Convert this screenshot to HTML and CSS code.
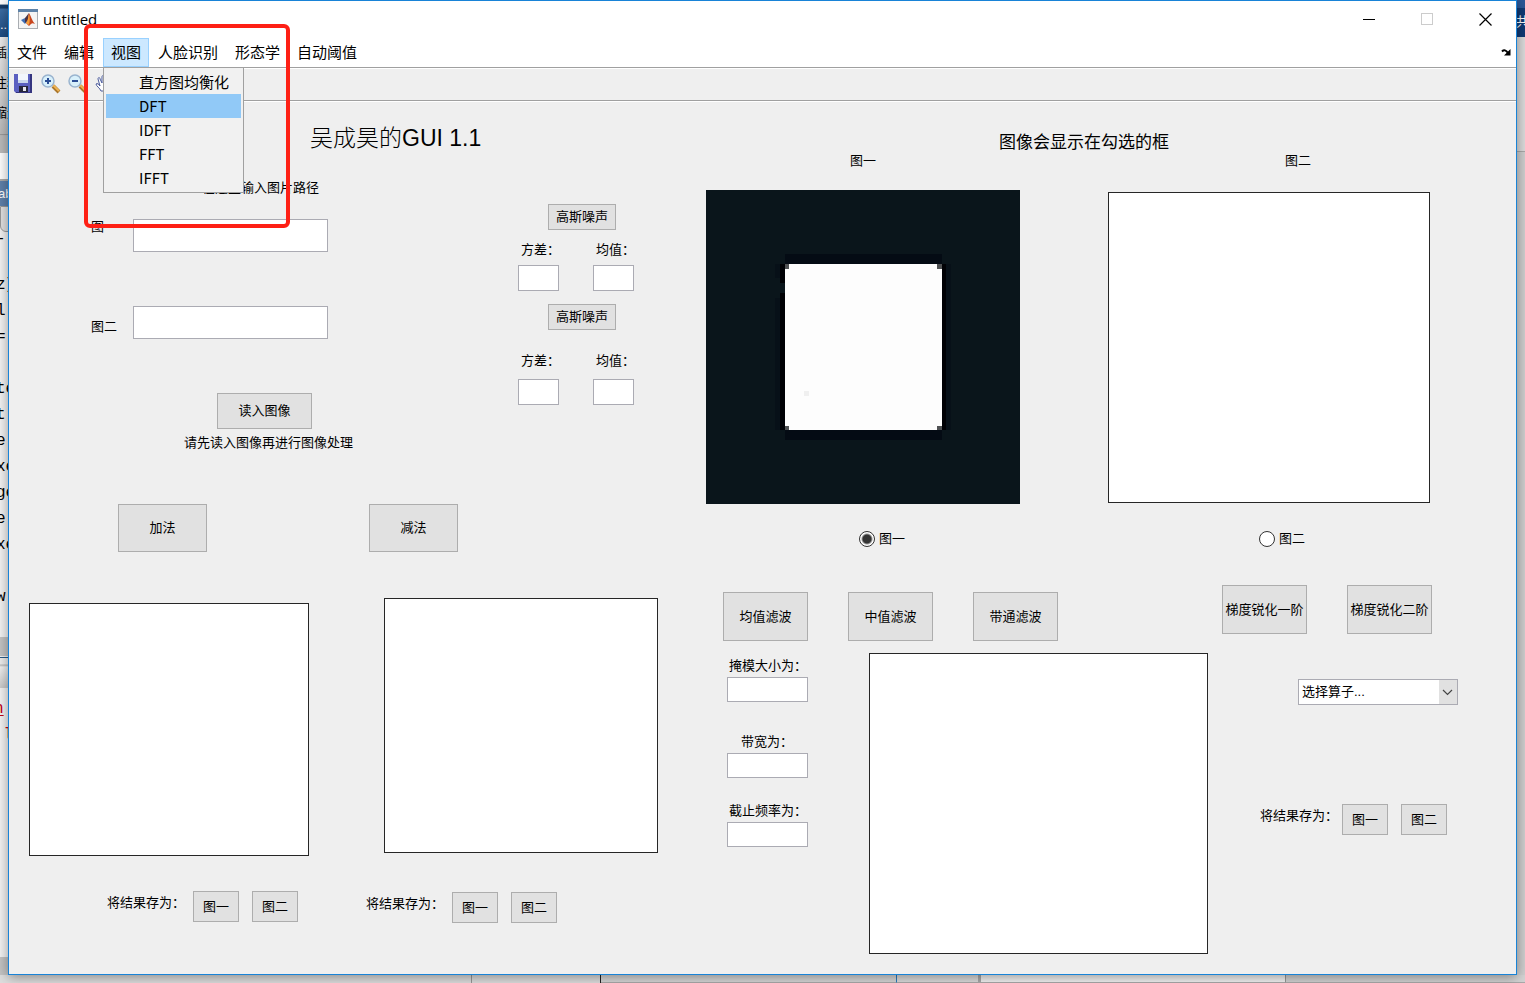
FILE: index.html
```
<!DOCTYPE html>
<html lang="zh-CN">
<head>
<meta charset="utf-8">
<title>untitled</title>
<link rel="stylesheet" href="styles.css">
</head>
<body>
<div class="desktop">
  <div class="backdrop" aria-hidden="true">
    <div class="strip strip-left">
      <div class="bd-top"></div>
      <div class="bd-blue">..</div>
      <div class="bd-ribbon"><span>插入</span><span>注释</span><span>缩进</span></div>
      <div class="bd-path"></div>
      <div class="bd-tabs">ab</div>
      <div class="bd-tab2"></div>
      <pre class="bd-line">-:</pre>
      <pre class="bd-code">

z]
l
=:

te
t
e:
xe
ge
e:
xe

w</pre>
      <div class="bd-bar"></div>
      <div class="bd-bar2"></div>
      <pre class="bd-output"><u>n</u>
 l</pre>
      <div class="bd-bar"></div>
    </div>
    <div class="strip strip-right">
      <div class="bd-blue2"></div>
      <div class="bd-navy">共享</div>
      <div class="bd-grey"></div>
      <div class="bd-grey2"></div>
    </div>
    <div class="strip-bottom">
      <div class="bb bb-a"></div><div class="bb bb-b"></div><div class="bb bb-c"></div><div class="bb bb-d"></div><div class="bb bb-e"></div><div class="bb bb-f"></div>
    </div>
  </div>

  <main class="window">
    <header class="titlebar">
      <svg class="app-icon" width="20" height="20" viewBox="0 0 20 20">
        <rect x=".5" y=".5" width="19" height="19" fill="#f4f4f4" stroke="#a9adb2"/>
        <rect x="0" y="0" width="20" height="3" fill="#5d82a8"/>
        <path d="M3 11l4-2 3 2-3 4z" fill="#3f6fb5"/>
        <path d="M7 9l4-5-1 7-3 3z" fill="#4b3140"/>
        <path d="M11 4c2 3 3 8 6 11-2-1-3-1-4 0l-2 2-3-3c2-2 2-6 3-10z" fill="#c8451e"/>
        <path d="M11 5c1 4 1 7 0 11l-3-2c2-2 2-5 3-9z" fill="#f5a03a"/>
      </svg>
      <span class="title">untitled</span>
      <div class="win-buttons">
        <button class="win-btn" aria-label="最小化"><svg width="13" height="13" viewBox="0 0 13 13"><path d="M0 6.500h12" stroke="#000"/></svg></button>
        <button class="win-btn" aria-label="最大化" disabled><svg width="13" height="13" viewBox="0 0 13 13"><rect x=".5" y=".5" width="11" height="11" fill="none" stroke="#ccc"/></svg></button>
        <button class="win-btn" aria-label="关闭"><svg width="13" height="13" viewBox="0 0 13 13"><path d="M.5.5l12 12M12.500.5l-12 12" stroke="#000" stroke-width="1.200"/></svg></button>
      </div>
    </header>

    <nav class="menubar">
      <button class="menu-btn">文件</button>
      <button class="menu-btn">编辑</button>
      <div class="menu-open">
        <button class="menu-btn active" aria-expanded="true">视图</button>
        <div class="dropdown" role="menu">
          <button class="drop-item" role="menuitem">直方图均衡化</button>
          <button class="drop-item hover" role="menuitem">DFT</button>
          <button class="drop-item" role="menuitem">IDFT</button>
          <button class="drop-item" role="menuitem">FFT</button>
          <button class="drop-item" role="menuitem">IFFT</button>
        </div>
      </div>
      <button class="menu-btn">人脸识别</button>
      <button class="menu-btn">形态学</button>
      <button class="menu-btn">自动阈值</button>
      <button class="undock" aria-label="停靠"><svg width="10" height="7" viewBox="0 0 10 7"><path d="M1 2.500C3 .5 5 1 7 4" fill="none" stroke="#000" stroke-width="2"/><path d="M9.500 0v6.500H3z" fill="#000"/></svg></button>
    </nav>

    <div class="toolbar">
      <button class="tool" aria-label="保存"><svg width="20" height="20" viewBox="0 0 20 20">
        <path d="M0 0h18v19H2l-2-2z" fill="#5a5fc0"/><path d="M16 0h2v19H2v-1h14z" fill="#35357f"/>
        <rect x="4" y="0" width="10" height="9" fill="#f2f6fc"/><path d="M4 6h10v3H4z" fill="#c9d6ec"/>
        <rect x="5" y="12" width="9" height="6" fill="#26263c"/><rect x="9" y="13" width="3" height="4" fill="#e6e6f0"/></svg></button>
      <button class="tool" aria-label="放大"><svg width="20" height="20" viewBox="0 0 20 20">
        <path d="M12 12l6 6" stroke="#a9762c" stroke-width="4"/><path d="M12 11l6 6" stroke="#efb352" stroke-width="2"/>
        <circle cx="7" cy="7" r="6" fill="#d8f0fb" stroke="#9ab4cf" stroke-width="1.500"/><path d="M4 7h6M7 4v6" stroke="#2b4d95" stroke-width="2"/></svg></button>
      <button class="tool" aria-label="缩小"><svg width="20" height="20" viewBox="0 0 20 20">
        <path d="M12 12l6 6" stroke="#a9762c" stroke-width="4"/><path d="M12 11l6 6" stroke="#efb352" stroke-width="2"/>
        <circle cx="7" cy="7" r="6" fill="#d8f0fb" stroke="#9ab4cf" stroke-width="1.500"/><path d="M4 7h6" stroke="#2b4d95" stroke-width="2"/></svg></button>
      <button class="tool" aria-label="平移"><svg width="20" height="20" viewBox="0 0 20 20">
        <path d="M6 17c-1-3-5-5-5-7 1-1 3 0 4 2L3 5c0-2 2-2 2 0l2 4V3c0-2 2-2 2 0v6l2-5c1-1 2 0 2 1l-1 6 2-3c1-1 2 0 2 1l-4 8z" fill="#fff" stroke="#4a5a9c"/></svg></button>
    </div>

    <div class="work">
      <section class="left">
        <h1>吴成昊的GUI 1.1</h1>
        <div class="left-upper">
          <div class="path-form">
            <p class="path-hint">在这里输入图片路径</p>
            <div class="path-row first"><label for="p1">图一</label><input id="p1" type="text"></div>
            <div class="path-row second"><label for="p2">图二</label><input id="p2" type="text"></div>
            <button class="btn read">读入图像</button>
            <p class="read-hint">请先读入图像再进行图像处理</p>
            <div class="arith"><button class="btn">加法</button><button class="btn">减法</button></div>
          </div>
          <div class="noise">
            <button class="btn noise-btn">高斯噪声</button>
            <div class="pair">
              <div class="mini"><label for="v1">方差：</label><input id="v1" type="text"></div>
              <div class="mini"><label for="m1">均值：</label><input id="m1" type="text"></div>
            </div>
            <button class="btn noise-btn">高斯噪声</button>
            <div class="pair low">
              <div class="mini"><label for="v2">方差：</label><input id="v2" type="text"></div>
              <div class="mini"><label for="m2">均值：</label><input id="m2" type="text"></div>
            </div>
          </div>
        </div>
        <div class="left-lower">
          <div class="result add">
            <div class="axes"></div>
            <div class="save"><span>将结果存为：</span><button class="btn">图一</button><button class="btn">图二</button></div>
          </div>
          <div class="result sub">
            <div class="axes"></div>
            <div class="save"><span>将结果存为：</span><button class="btn">图一</button><button class="btn">图二</button></div>
          </div>
        </div>
      </section>

      <section class="right">
        <h2>图像会显示在勾选的框</h2>
        <div class="views">
          <div class="view one">
            <p>图一</p>
            <svg class="picture" viewBox="0 0 314 314" shape-rendering="crispEdges" role="img" aria-label="图一">
              <rect width="314" height="314" fill="#0a151b"/>
              <path d="M79 64h157v10H79zM79 240h157v10H79z" fill="#040b14"/>
              <path d="M69 74h5v14h-5zM69 108h5v132h-5zM240 74h5v166h-5z" fill="#071018"/>
              <path d="M74 74h5v19h-5zM74 103h5v137h-5zM236 74h4v166h-4z" fill="#000105"/>
              <rect x="79" y="74" width="157" height="166" fill="#fdfdfd"/>
              <path d="M79 74h4v5h-4zM231 74h5v5h-5zM79 236h4v4h-4zM231 236h5v4h-5z" fill="#505254"/>
              <rect x="98" y="201" width="5" height="5" fill="#f0f0f0"/>
            </svg>
            <label class="pick"><input type="radio" name="target" checked>图一</label>
          </div>
          <div class="view two">
            <p>图二</p>
            <div class="axes"></div>
            <label class="pick"><input type="radio" name="target">图二</label>
          </div>
        </div>
        <div class="right-lower">
          <div class="filters">
            <div class="btn-row"><button class="btn">均值滤波</button><button class="btn">中值滤波</button><button class="btn">带通滤波</button></div>
            <div class="filter-body">
              <div class="fields">
                <label for="mask">掩模大小为：</label><input id="mask" type="text">
                <label class="band" for="band">带宽为：</label><input id="band" type="text">
                <label class="cut" for="cut">截止频率为：</label><input id="cut" type="text">
              </div>
              <div class="axes"></div>
            </div>
          </div>
          <div class="sharpen">
            <div class="btn-row"><button class="btn">梯度锐化一阶</button><button class="btn">梯度锐化二阶</button></div>
            <div class="combo">
              <select aria-label="选择算子"><option>选择算子...</option></select>
              <svg width="18" height="24" viewBox="0 0 18 24" aria-hidden="true"><rect width="18" height="24" fill="#e1e1e1"/><path d="M4 10l4.500 4.500L13 10" fill="none" stroke="#444" stroke-width="1.200"/></svg>
            </div>
            <div class="save"><span>将结果存为：</span><button class="btn">图一</button><button class="btn">图二</button></div>
          </div>
        </div>
      </section>
    </div>
  </main>
  <div class="marker" aria-hidden="true"></div>
</div>
</body>
</html>
```
FILE: styles.css
```
* { box-sizing: border-box; }
body {
  margin: 0;
  background: #d8d8d8;
  color: #000;
  font: 13px/16px "Liberation Sans", "Noto Sans CJK SC", sans-serif;
}
h1, h2, p, pre { margin: 0; font-weight: 400; }
button, input, select { font: inherit; color: inherit; margin: 0; padding: 0; border-radius: 0; }
button { background: none; border: 0; white-space: nowrap; }
svg { display: block; flex: none; }

.desktop { position: relative; padding: 0 8px 8px; overflow: hidden; }

/* windows lying behind */
.backdrop { position: absolute; inset: 0; }
.strip { position: absolute; top: 0; bottom: 0; width: 9px; overflow: hidden; display: flex; flex-direction: column; }
.strip > * { flex: none; overflow: hidden; }
.strip-left { left: 0; background: #f4f4f4; }
.strip-right { right: 0; background: #d8d8d8; }
.bd-top { height: 5px; background: #fff; border-bottom: 1px solid #9ab; }
.bd-blue { height: 32px; line-height: 40px; background: linear-gradient(#163c69 10%, #3d6ea5 12%, #1d4c82); color: #fff; }
.bd-ribbon { height: 116px; padding-top: 8px; background: linear-gradient(#eee, #bbb 84%, #999 84%, #bbb 85%); display: flex; flex-direction: column; gap: 14px; }
.bd-ribbon span { width: 30px; height: 16px; margin-left: -6px; }
.bd-path { height: 28px; background: #fff; border-bottom: 2px solid #aaa; }
.bd-tabs { height: 25px; line-height: 25px; margin-left: -2px; background: #5f81ab; color: #fff; }
.bd-tab2 { height: 26px; background: #e2e2e2; border: 1px solid #999; border-radius: 0 0 0 6px; }
.bd-line, .bd-code { margin-left: -4px; font: 16px/26px "Liberation Mono", monospace; }
.strip > .bd-line { height: 14px; line-height: 14px; }
.bd-code { height: 391px; }
.bd-bar { height: 19px; background: #c4c4c4; }
.bd-bar2 { height: 31px; margin-top: 1px; border-top: 1px solid #2a5b88; background: linear-gradient(#eee 6px, #bbb 7px, #f2f2f2 9px, #ccc 29px); }
.bd-output { height: 269px; padding-top: 8px; margin-left: -6px; font: 16px/26px "Liberation Mono", monospace; color: #c00018; }
.bd-output u { text-underline-offset: 2px; }
.bd-blue2 { height: 8px; background: #2b5797; }
.bd-navy { height: 29px; width: 30px; line-height: 27px; background: #103a75; color: #fff; }
.bd-grey { height: 115px; background: #dcdcdc; border-bottom: 1px solid #aaa; }
.bd-grey2 { height: 831px; background: #cfcfcf; }
.strip-bottom { position: absolute; left: 0; right: 0; bottom: 0; height: 8px; display: flex; background: #dedede; }
.bb { height: 100%; border-bottom: 1px solid #aaa; border-right: 1px solid #999; }
.bb-a { flex: 473; border-bottom: 0; }
.bb-b { flex: 129; border-bottom: 0; border-right-color: #222; }
.bb-c { flex: 296; border-right-color: #2a7cc0; background: #d8d8d8; }
.bb-d { flex: 81; border-right: 3px solid #aaa; background: #ddd; }
.bb-e { flex: 306; background: #f4f4f4; }
.bb-f { flex: 240; border-right: 0; background: #d4d4d4; }

.window { position: relative; background: #efefef; border: 1px solid #1883d7; box-shadow: 0 2px 12px rgba(0, 0, 0, .4); }

.titlebar { display: flex; align-items: center; height: 37px; padding: 0 2px 1px 9px; background: #fff; }
.title { margin-left: 5px; font: 15px/20px "Open Sans", "Noto Sans", sans-serif; }
.win-buttons { display: flex; margin-left: auto; }
.win-btn { width: 58px; height: 30px; display: grid; place-items: center; }

.menubar { display: flex; gap: 1px; height: 30px; background: #fff; border-bottom: 1px solid #a0a0a0; font: 15px/20px "Noto Sans CJK SC", sans-serif; }
.menu-btn { height: 29px; padding: 0 8px 2px; }
.menu-open { position: relative; }
.menu-btn.active { padding: 0 7px 2px; border: 1px solid #99d1ff; background: #cce8ff; }
.undock { margin-left: auto; padding-right: 5px; }
.dropdown { position: absolute; z-index: 2; top: 29px; left: 0; width: 141px; padding: 2px; background: #f1f1f1; border: 1px solid #a0a0a0; display: flex; flex-direction: column; }
.drop-item { height: 24px; padding-left: 33px; text-align: left; line-height: 24px; }
.drop-item.hover { background: #91c9f7; }

.toolbar { display: flex; align-items: center; gap: 7px; height: 33px; padding: 0 0 2px 5px; border-top: 1px solid #fff; border-bottom: 1px solid #a0a0a0; }
.tool { width: 20px; height: 20px; }

.work { display: grid; grid-template-columns: 682fr 825fr; border-top: 1px solid #fff; padding-bottom: 20px; }
.btn { background: #e1e1e1; border: 1px solid #adadad; text-align: center; }
input[type="text"] { background: #fff; border: 1px solid #ababb3; height: 26px; padding: 0 3px; }
.axes { background: #fff; border: 1px solid #262626; }

.left h1 { margin: 20px 0 0 301px; font-size: 23px; line-height: 32px; font-weight: 300; white-space: nowrap; }
.left-upper { display: grid; grid-template-columns: minmax(0, 441fr) minmax(0, 241fr); }
.path-hint { margin: 26px 0 0 193px; }
.path-row { display: flex; align-items: flex-start; padding-left: 82px; }
.path-row label { width: 42px; }
.path-row input[type="text"] { width: 195px; height: 33px; }
.path-row.first { margin-top: 23px; }
.path-row.second { margin-top: 54px; }
.path-row.second label { padding-top: 13px; }
.read { display: block; width: 95px; height: 36px; margin: 54px 0 0 208px; }
.read-hint { margin: 6px 0 0 175px; white-space: nowrap; }
.arith { display: flex; gap: 162px; margin: 53px 0 0 109px; }
.arith .btn { width: 89px; height: 48px; flex: none; }

.noise { padding: 50px 0 0 68px; }
.noise-btn { display: block; width: 68px; height: 26px; margin-left: 30px; }
.pair { display: flex; gap: 34px; padding: 12px 0 13px; }
.mini { display: flex; flex-direction: column; gap: 7px; width: 41px; }
.mini label { padding-left: 3px; white-space: nowrap; }
.pair.low { padding-top: 23px; }
.pair.low .mini { gap: 10px; }

.left-lower { display: grid; grid-template-columns: 355fr 327fr; }
.add .axes { margin: 51px 55px 0 20px; height: 253px; }
.sub .axes { margin: 46px 33px 0 20px; height: 255px; }
.save { display: flex; align-items: flex-start; gap: 13px; }
.save span { width: 73px; padding-top: 4px; white-space: nowrap; }
.save .btn { width: 46px; height: 31px; }
.add .save { margin: 35px 0 0 98px; }
.sub .save { margin: 39px 0 0 2px; }

.right h2 { margin: 31px 0 0 308px; font-size: 17px; line-height: 20px; }
.views { display: grid; grid-template-columns: 403fr 422fr; }
.view { display: flex; flex-direction: column; }
.view p { text-align: center; }
.one { padding: 0 74px 0 15px; }
.picture { width: 100%; height: auto; margin-top: 21px; }
.two { padding: 0 86px 0 14px; }
.two p { padding-left: 58px; }
.two .axes { height: 311px; margin-top: 23px; }
.pick { display: flex; align-items: center; justify-content: center; gap: 4px; padding-left: 38px; margin-top: 27px; }
.two .pick { padding-left: 26px; margin-top: 28px; }
.pick input { appearance: none; width: 16px; height: 16px; border: 1px solid #333; border-radius: 50%; background: #fff; }
.pick input:checked { background: radial-gradient(circle, #333 4px, #fff 6px); }

.right-lower { display: grid; grid-template-columns: 517fr 308fr; }
.btn-row { display: flex; gap: 40px; }
.btn-row .btn { width: 85px; height: 49px; flex: none; }
.filters .btn-row { margin: 45px 0 0 32px; }
.filter-body { display: grid; grid-template-columns: 178px 1fr; margin-top: 12px; }
.filter-body .axes { height: 301px; }
.fields { display: flex; flex-direction: column; align-items: flex-start; padding: 5px 0 0 36px; }
.fields label { padding-left: 2px; }
.fields input[type="text"] { width: 81px; height: 25px; margin-top: 3px; }
.fields .band { margin-top: 32px; padding-left: 14px; }
.fields .cut { margin-top: 25px; }

.sharpen .btn-row { margin: 38px 0 0 14px; }
.combo { position: relative; width: 160px; height: 26px; margin: 45px 0 0 90px; }
.combo select { appearance: none; width: 100%; height: 26px; padding: 0 20px 0 3px; background: #fff; border: 1px solid #ababb3; }
.combo svg { position: absolute; top: 1px; right: 1px; pointer-events: none; }
.sharpen .save { margin: 99px 0 0 52px; }
.sharpen .save span { width: 69px; }

/* highlight frame drawn over the menu */
.marker { position: absolute; z-index: 3; top: 24px; left: 84px; width: 206px; height: 204px; border: 4px solid #fe2015; border-radius: 6px; pointer-events: none; }
```
